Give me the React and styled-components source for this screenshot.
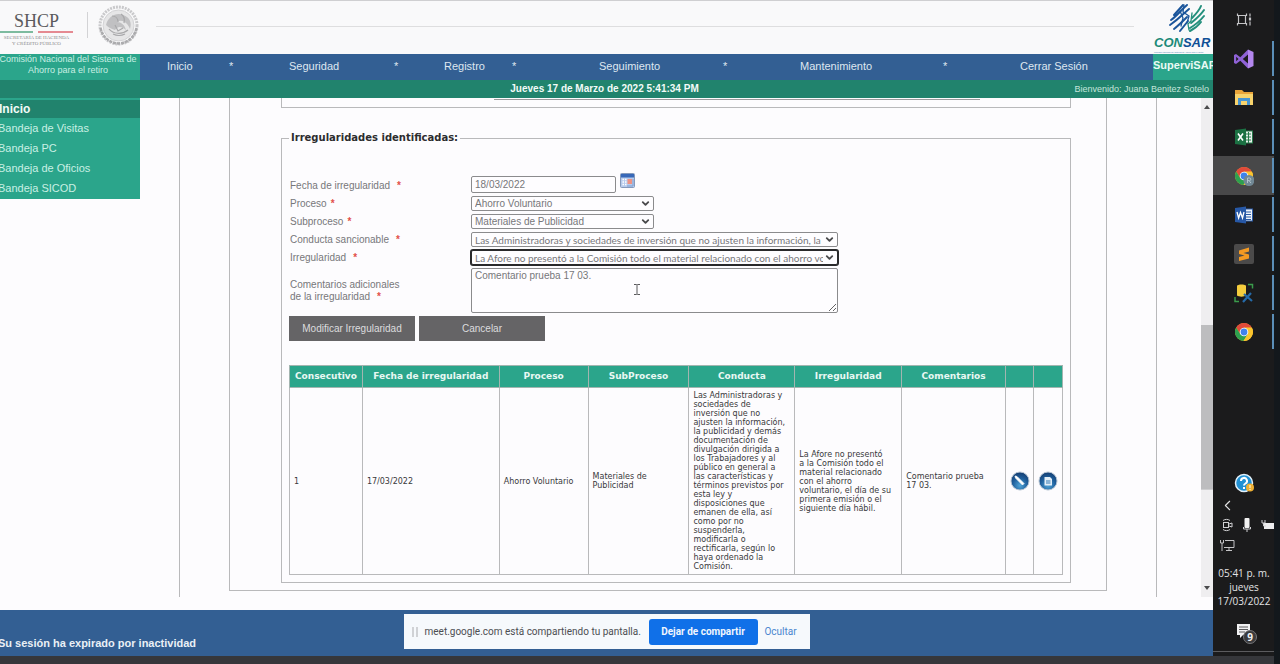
import React from "react";
import styled, { createGlobalStyle, css } from "styled-components";
import { ChevronDown, ChevronLeft } from "lucide-react";

const teal = "#2ba58b";
const darkTeal = "#21836d";
const blue = "#335f93";
const rule = "#b9b9bb";
const sans = `"Liberation Sans", Arial, sans-serif`;
const wide = `"DejaVu Sans", Verdana, sans-serif`;
const ui = `"Open Sans", "Noto Sans", sans-serif`;

const GlobalStyle = createGlobalStyle`
  *, *::before, *::after { box-sizing: border-box; }
  body { margin: 0; background: #fdfcfe; font-family: ${sans}; font-size: 10px; }
  button, input, select, textarea { font: inherit; margin: 0; }
  a { color: inherit; text-decoration: none; }
  ul { list-style: none; margin: 0; padding: 0; }
`;

const Screen = styled.div`
  min-height: 100vh;
  display: grid;
  grid-template-columns: minmax(0, 1fr) 61px 6px;
  grid-template-rows: minmax(0, 1fr) 8px;
`;
const Site = styled.div`
  display: flex;
  flex-direction: column;
  min-width: 0;
  overflow: hidden;
`;
const BottomStrip = styled.div`
  grid-column: 1 / 3;
  grid-row: 2;
  background: #36373b;
`;
const RightEdge = styled.div`
  grid-column: 3;
  grid-row: 1 / 3;
  background: #13181c;
`;

/* Header */
const Header = styled.header`
  height: 54px;
  display: flex;
  background: #f9f9fa;
  border-top: 1px solid #cfcfd1;
`;
const Shcp = styled.div`
  width: 73px;
  padding-top: 12px;
  text-align: center;
  font-family: "Liberation Serif", serif;
  color: #5b5b5d;
`;
const ShcpName = styled.div`
  font-size: 18px;
  line-height: 17px;
`;
const ShcpRule = styled.div`
  display: flex;
  justify-content: space-between;
  margin: 1px 0 2px;
  &::before, &::after {
    content: "";
    width: 33px;
    height: 2px;
    background: #7dbb9f;
  }
  &::after { width: 35px; background: #e58a92; }
`;
const ShcpCaption = styled.div`
  font-size: 5px;
  line-height: 6px;
  white-space: nowrap;
  color: #8a8a8c;
`;
const LogoDivider = styled.div`
  width: 1px;
  height: 26px;
  margin: 11px 9px 0 14px;
  background: #d3d3d5;
`;
const HeaderRule = styled.div`
  flex: 1;
  height: 1px;
  margin: 25px 20px 0 16px;
  background: #dededf;
`;
const Consar = styled.div`
  width: 59px;
  white-space: nowrap;
  svg { display: block; margin: 1px 0 0 13px; }
`;
const ConsarName = styled.div`
  font-size: 13px;
  line-height: 15px;
  font-style: italic;
  font-weight: bold;
  color: #0f4f96;
  span { color: #1c8a78; }
`;
const ConsarCaption = styled.div`
  font-size: 2px;
  line-height: 4px;
  color: #4b7fae;
`;

/* Navigation */
const Nav = styled.nav`
  height: 26px;
  display: flex;
  background: ${blue};
  color: #dfe7f0;
`;
const OrgName = styled.div`
  width: 140px;
  margin-left: -2px;
  margin-right: 2px;
  box-shadow: 2px 0 ${teal};
  background: ${teal};
  color: #c9f0e4;
  font-size: 9px;
  line-height: 11px;
  text-align: center;
  white-space: nowrap;
`;
const Menu = styled.ul`
  flex: 1;
  display: flex;
  padding-left: 27px;
  font-size: 11px;
  line-height: 25px;
`;
const MenuItem = styled.li`
  flex: ${(p) => p.$link + p.$star} 1 0;
  display: grid;
  grid-template-columns: ${(p) => p.$link}fr ${(p) => p.$star}fr;
  white-space: nowrap;
`;
const AppName = styled.div`
  width: 60px;
  overflow: hidden;
  background: ${teal};
  color: #eafaf5;
  font-size: 11px;
  font-weight: bold;
  line-height: 23px;
`;
const StatusBar = styled.div`
  height: 18px;
  display: grid;
  grid-template-columns: 1fr auto 1fr;
  padding-right: 4px;
  background: ${darkTeal};
  line-height: 18px;
  color: #f2fbf8;
`;
const Welcome = styled.span`
  text-align: right;
  font-size: 9px;
  color: #c5e6dc;
`;

/* Body */
const Main = styled.main`
  flex: 1;
  display: flex;
  min-height: 0;
  padding-bottom: 13px;
`;
const Sidebar = styled.nav`
  width: 140px;
  align-self: flex-start;
  overflow: hidden;
  background: ${teal};
  padding-bottom: 1px;
`;
const SideTitle = styled.div`
  background: ${darkTeal};
  border-top: 2px solid ${teal};
  color: #f2fbf8;
  font-size: 12px;
  font-weight: bold;
  line-height: 18px;
  text-indent: -1px;
`;
const SideLink = styled.a`
  display: block;
  color: #c9f0e4;
  font-size: 11px;
  line-height: 20px;
  text-indent: -2px;
`;
const Column = styled.div`
  flex: 1;
  min-width: 0;
  margin: 0 44px 0 39px;
  padding: 0 49px;
  border: solid ${rule};
  border-width: 0 1px;
`;
const Panel = styled.div`
  border: solid ${rule};
  border-width: 0 1px 1px;
  padding: 0 35px 7px 51px;
`;
const PreviousGroup = styled.div`
  height: 10px;
  margin-bottom: 23px;
  border: 1px solid ${rule};
  border-top: 0;
  padding: 0 90px 0 212px;
  &::before {
    content: "";
    display: block;
    height: 2px;
    border-bottom: 1px solid #9a9a9c;
  }
`;
const Group = styled.fieldset`
  min-width: 0;
  margin: 0;
  padding: 28px 7px 7px;
  border: 1px solid ${rule};
`;
const Legend = styled.legend`
  padding: 0 2px;
  font: bold 10px/14px ${wide};
  color: #2c2c2e;
`;
const Form = styled.form`
  color: #77777a;
`;
const Row = styled.div`
  display: grid;
  grid-template-columns: 182px minmax(0, 1fr);
  align-items: ${(p) => p.$align || "center"};
  margin-bottom: 3px;
`;
const Label = styled.label`
  padding-left: 1px;
  line-height: ${(p) => (p.$short ? 12 : 15)}px;
`;
const Required = styled.span`
  margin-left: ${(p) => (p.$near ? 4 : 7)}px;
  color: #e2504a;
  font-weight: bold;
`;
const DateField = styled.div`
  display: flex;
  align-items: flex-end;
  gap: 4px;
`;
const fieldLook = css`
  border: 1px solid #8b8b8d;
  border-radius: 2px;
  background: #fefdff;
  color: #77777a;
  outline: none;
`;
const DateInput = styled.input`
  ${fieldLook}
  width: 145px;
  height: 17px;
  padding: 0 3px;
`;
const IconButton = styled.button`
  display: ${(p) => (p.$center ? "block" : "flex")};
  padding: 0;
  margin: ${(p) => (p.$center ? "0 auto" : "0 0 5px")};
  border: 0;
  background: none;
  svg { display: block; }
`;
const SelectBox = styled.div`
  position: relative;
  width: ${(p) => (p.$wide ? 367 : 183)}px;
  svg { position: absolute; right: 3px; top: 2px; pointer-events: none; color: #4a4a4c; }
`;
const Select = styled.select`
  ${fieldLook}
  appearance: none;
  display: block;
  width: 100%;
  height: 15px;
  padding: 0 14px 0 3px;
  font-family: ${(p) => (p.$long ? `Lato, ${sans}` : sans)};
  ${(p) => p.$active && css`
    border-color: #29292b;
    box-shadow: 0 0 0 1px #29292b;
  `}
`;
const CommentBox = styled.div`
  position: relative;
  width: 367px;
  svg { position: absolute; left: 162px; top: 15px; }
`;
const Comment = styled.textarea`
  ${fieldLook}
  display: block;
  width: 100%;
  height: 45px;
  padding: 1px 3px;
  line-height: 12px;
`;
const Actions = styled.div`
  display: flex;
  gap: 4px;
  margin-bottom: 24px;
`;
const Action = styled.button`
  width: 126px;
  height: 25px;
  border: 0;
  background: #656466;
  color: #dcdcde;
`;
const Table = styled.table`
  width: 100%;
  table-layout: fixed;
  border-collapse: collapse;
  font-family: ${wide};
  font-size: 8px;
  line-height: 9px;
  color: #39393b;
`;
const Th = styled.th`
  height: 22px;
  padding: 0;
  border: 1px solid #a3b5b0;
  background: ${teal};
  color: #e8f8f3;
  font-size: 9px;
`;
const Td = styled.td`
  height: 187px;
  padding: 0 4px;
  border: 1px solid ${rule};
`;
const Line = styled.span`
  display: block;
`;
const ScrollBar = styled.div`
  width: 12px;
  display: flex;
  flex-direction: column;
  align-items: center;
  justify-content: space-between;
  padding: 7px 0;
  background: linear-gradient(#bdbdbf, #bdbdbf) 0 68% / 100% 33% no-repeat #efeef0;
`;

/* Footer */
const Footer = styled.footer`
  position: relative;
  height: 46px;
  padding-top: 26px;
  background: ${blue};
  color: #eaf0f6;
  font-size: 11px;
  font-weight: bold;
  line-height: 14px;
  text-indent: -2px;
`;
const ShareBar = styled.div`
  position: absolute;
  left: 50%;
  top: 4px;
  transform: translateX(-50%);
  width: 406px;
  height: 35px;
  display: flex;
  align-items: center;
  padding: 0 8px;
  background: #f6f9fc;
  font: 10px/14px Roboto, ${sans};
  color: #4c4e52;
  text-indent: 0;
  white-space: nowrap;
`;
const Grip = styled.span`
  width: 6px;
  height: 10px;
  margin-right: 7px;
  border: solid #d0d2d5;
  border-width: 0 2px;
`;
const StopButton = styled.button`
  width: 109px;
  height: 26px;
  margin-left: auto;
  border: 0;
  border-radius: 3px;
  background: #1070e8;
  color: #f1f6fe;
  font-weight: 700;
`;
const HideButton = styled.button`
  width: 38px;
  padding: 0;
  margin: 0 2px 0 4px;
  border: 0;
  background: none;
  color: #4a86cf;
`;

/* Taskbar */
const Taskbar = styled.aside`
  display: flex;
  flex-direction: column;
  background: #1b1b1c;
  color: #e3e3e4;
  border-bottom: 4px solid #1b1b1c;
  box-shadow: inset 0 -1px #5c5c5f;
`;
const Slot = styled.div`
  height: 39px;
  display: flex;
  align-items: center;
  padding-left: 21px;
  background: ${(p) => (p.$active ? "#484849" : "transparent")};
  border-right: 2px solid transparent;
  border-image: ${(p) =>
    p.$running ? "linear-gradient(transparent 3px, #5b8fb8 3px, #5b8fb8 36px, transparent 36px) 1" : "none"};
`;
const Tray = styled.div`
  margin-top: auto;
  display: flex;
  flex-direction: column;
  height: 179px;
`;
const TrayRow = styled.div`
  display: flex;
  align-items: center;
  height: 20px;
  margin-bottom: ${(p) => p.$after || 0}px;
  padding-left: ${(p) => p.$indent || 8}px;
  gap: 8px;
  svg { flex: none; }
`;
const Clock = styled.time`
  margin: 11px 0 15px;
  padding-left: 1px;
  text-align: center;
  font: 10px/14px ${ui};
  white-space: nowrap;
`;

const Emblem = () => (
  <svg width="43" height="43" viewBox="0 0 43 43" style={{ marginTop: 3 }} fill="none" aria-label="Escudo nacional">
    <circle cx="21.500" cy="21.500" r="18.500" stroke="#c9c9cb" strokeWidth="3" strokeDasharray="2 1" />
    <circle cx="21.500" cy="21.500" r="15.500" fill="#e6e6e7" stroke="#d3d3d5" />
    <path d="M9 21c2-9 11-13 17-10 7 2 9 8 7 14-3-7-8-10-13-7 4 0 8 3 9 8-5-4-8-4-11 0-3-1-6-2-9-5z" fill="#c0c0c2" />
    <path d="M15 12c4 0 6 3 6 6M24 10c3 2 4 5 3 9M12 25c4 5 13 6 19 1M16 30c4 2 8 2 12 0M18 21l3 6 5-3" stroke="#a8a8aa" strokeWidth="1.200" />
    <path d="M3.500 24c2 9 9 15 18 15.500 9-.5 16-6 18-15.500" stroke="#ababad" strokeWidth="2.500" strokeDasharray="3 1" />
  </svg>
);

const ConsarMark = () => (
  <svg width="40" height="33" viewBox="0 0 40 33" fill="none" strokeLinecap="round">
    <g stroke="#1b559b" strokeWidth="2">
      <path d="M16 3L7 13M20 3C14 8 10 14 4 18M22 7C16 12 12 17 3 23M20 15C16 19 12 23 7 27M21 19l-8 10" />
      <path d="M17 3l-1 7 6 4-2 7M13 9l3 7-2 8" strokeWidth="1.300" />
    </g>
    <g stroke="#238f7c" strokeWidth="2">
      <path d="M34 4c-2 5-5 8-9 12M37 8c-4 6-8 9-13 13M37 14c-4 5-9 9-14 12M34 20c-3 4-7 7-11 9" />
      <path d="M25 11l-1 8-3 3 1 6" strokeWidth="1.300" />
    </g>
  </svg>
);

const Calendar = () => (
  <svg width="15" height="15" viewBox="0 0 15 15">
    <rect x=".5" y=".5" width="14" height="14" rx="1" fill="#b7cbec" stroke="#8599ba" />
    <rect x="1" y="1" width="13" height="3.500" fill="#3868b8" />
    <path d="M2.500 6.500h5M2.500 9h5M2.500 11.500h4" stroke="#fff" strokeWidth="1.500" strokeDasharray="1.500 1" />
    <rect x="7.500" y="6" width="4.500" height="5" fill="#ee9283" />
    <path d="M13 6v7H7" stroke="#7f9fd3" fill="none" />
  </svg>
);

const Orb = ({ id, children }) => (
  <svg width="20" height="20" viewBox="0 0 20 20">
    <defs>
      <radialGradient id={id} cx=".5" cy=".75" r=".75">
        <stop offset="0" stopColor="#4fa3d6" />
        <stop offset=".55" stopColor="#1f5f9c" />
        <stop offset="1" stopColor="#153c70" />
      </radialGradient>
    </defs>
    <circle cx="10" cy="10" r="9" fill={`url(#${id})`} stroke="#b5c3d2" />
    {children}
  </svg>
);

const Chrome = () => (
  <g>
    <circle cx="10" cy="10" r="9" fill="#fbc42d" />
    <path d="M2.200 5.500A9 9 0 0 1 17.800 5.500L10 5.800 6 12z" fill="#e04a3a" />
    <path d="M2.200 5.500A9 9 0 0 0 9.500 19L13.700 12 6.200 12z" fill="#2da04f" />
    <path d="M10 5.800h7.900A9 9 0 0 1 9.500 19L14 12z" fill="#fbc42d" />
    <circle cx="10" cy="10" r="4.300" fill="#fff" />
    <circle cx="10" cy="10" r="3.400" fill="#3f83ec" />
  </g>
);

const taskIcons = {
  "Vista de tareas": (
    <g stroke="#c4c4c6" strokeWidth="1.200" fill="none">
      <path d="M3.500 3.500v2h9v-2M3.500 15.500v-2h9v2M4.500 5.500v8M11.500 5.500v8M16 3.500v3M16 11.500v4" />
      <path d="M16 7.500v3" strokeWidth="2.200" />
    </g>
  ),
  "Visual Studio": (
    <g>
      <path d="M14 0.500l5.500 2.500v14L14 19.500z" fill="#b487ee" />
      <path d="M14 .5L6.300 8.300 2 5 0 6v8l2 1 4.300-3.300L14 19.500v-5L8.800 10 14 5.500zM2.200 7.700L4.500 10l-2.300 2.300z" fill="#8f62d6" fillRule="evenodd" />
    </g>
  ),
  "Explorador de archivos": (
    <g>
      <path d="M1 2h7l2 2h9v12H1z" fill="#e9a53a" />
      <path d="M1 6h18v11H1z" fill="#f8d36c" />
      <path d="M4 17v-7h12v7h-3v-4H7v4z" fill="#4795d2" />
    </g>
  ),
  Excel: (
    <g>
      <rect x="10" y="4" width="8.500" height="12" fill="#e8f1ec" stroke="#277a4a" />
      <path d="M12 7h5M12 10h5M12 13h5M14.500 5v11" stroke="#277a4a" />
      <path d="M1 3L12 1.500v17L1 17z" fill="#1c7143" />
      <path d="M4 6.500l5 7M9 6.500l-5 7" stroke="#fff" strokeWidth="1.600" />
    </g>
  ),
  "Chrome perfil": (
    <g>
      <Chrome />
      <circle cx="15" cy="14.500" r="5.500" fill="#718895" />
      <path d="M13.500 17v-5h2a1.300 1.300 0 0 1 0 2.600h-2M15 14.600l2 2.400" stroke="#b4c4cc" fill="none" />
    </g>
  ),
  Word: (
    <g>
      <rect x="10" y="4" width="8.500" height="12" fill="#eef3fa" stroke="#2a5aa5" />
      <path d="M12 7h5M12 9.500h5M12 12h5M12 14.500h5" stroke="#2a5aa5" />
      <path d="M1 3L12 1.500v17L1 17z" fill="#2758a6" />
      <path d="M3 7l1.600 6L6.500 7.500l2 5.500L10 7" stroke="#fff" strokeWidth="1.300" fill="none" />
    </g>
  ),
  "Sublime Text": (
    <g>
      <rect width="20" height="20" rx="2" fill="#4b4a4a" />
      <path d="M5 6.500L15 3.500v4L9.500 9l5.500 1.500v4L5 17v-4l5.500-1.500L5 10z" fill="#f59a22" />
    </g>
  ),
  "SQL Server": (
    <g>
      <path d="M3 2.500c2-1.500 7-1.500 9 0v10c-2 1.500-7 1.500-9 0z" fill="#f5cd3d" />
      <path d="M14 1.500h4.500v4M1 14v4.500h4" stroke="#3b9b4b" strokeWidth="1.500" fill="none" />
      <path d="M10 11l8 7M17 10l-8 9" stroke="#256aa8" strokeWidth="2.200" />
    </g>
  ),
  Chrome: <Chrome />,
};

const menu = [
  ["Inicio", 62, 60],
  ["Seguridad", 105, 50],
  ["Registro", 68, 87],
  ["Seguimiento", 124, 77],
  ["Mantenimiento", 143, 77],
  ["Cerrar Sesión", 133, 0],
];

const columns = [
  ["Consecutivo", 73],
  ["Fecha de irregularidad", 137],
  ["Proceso", 89],
  ["SubProceso", 101],
  ["Conducta", 106],
  ["Irregularidad", 107],
  ["Comentarios", 104],
  ["", 28],
  ["", 29],
];

const conducta = [
  "Las Administradoras y",
  "sociedades de",
  "inversión que no",
  "ajusten la información,",
  "la publicidad y demás",
  "documentación de",
  "divulgación dirigida a",
  "los Trabajadores y al",
  "público en general a",
  "las características y",
  "términos previstos por",
  "esta ley y",
  "disposiciones que",
  "emanen de ella, así",
  "como por no",
  "suspenderla,",
  "modificarla o",
  "rectificarla, según lo",
  "haya ordenado la",
  "Comisión.",
];

const irregularidad = [
  "La Afore no presentó",
  "a la Comisión todo el",
  "material relacionado",
  "con el ahorro",
  "voluntario, el día de su",
  "primera emisión o el",
  "siguiente día hábil.",
];

const selects = [
  { id: "proceso", label: "Proceso", near: true, text: "Ahorro Voluntario" },
  { id: "subproceso", label: "Subproceso", near: true, text: "Materiales de Publicidad" },
  { id: "conducta", label: "Conducta sancionable", wide: true, text: "Las Administradoras y sociedades de inversión que no ajusten la información, la" },
  { id: "irregularidad", label: "Irregularidad", wide: true, active: true, text: "La Afore no presentó a la Comisión todo el material relacionado con el ahorro vo" },
];

const Lines = ({ of }) => of.map((text) => <Line key={text}>{text} </Line>);

export default function App() {
  return (
    <Screen>
      <GlobalStyle />
      <Site>
        <Header>
          <Shcp>
            <ShcpName>SHCP</ShcpName>
            <ShcpRule />
            <ShcpCaption>SECRETARÍA DE HACIENDA</ShcpCaption>
            <ShcpCaption>Y CRÉDITO PÚBLICO</ShcpCaption>
          </Shcp>
          <LogoDivider />
          <Emblem />
          <HeaderRule />
          <Consar>
            <ConsarMark />
            <ConsarName><span>CON</span>SAR</ConsarName>
            <ConsarCaption>Comisión Nacional del Sistema de Ahorro para el Retiro</ConsarCaption>
          </Consar>
        </Header>
        <Nav>
          <OrgName>
            Comisión Nacional del Sistema de
            <br />
            Ahorro para el retiro
          </OrgName>
          <Menu>
            {menu.map(([name, link, star]) => (
              <MenuItem key={name} $link={link} $star={star}>
                <a href="#menu">{name}</a>
                {star > 0 && <span>*</span>}
              </MenuItem>
            ))}
          </Menu>
          <AppName>SuperviSAR</AppName>
        </Nav>
        <StatusBar>
          <span />
          <strong>Jueves 17 de Marzo de 2022 5:41:34 PM</strong>
          <Welcome>Bienvenido: Juana Benitez Sotelo</Welcome>
        </StatusBar>
        <Main>
          <Sidebar>
            <SideTitle>Inicio</SideTitle>
            <SideLink href="#visitas">Bandeja de Visitas</SideLink>
            <SideLink href="#pc">Bandeja PC</SideLink>
            <SideLink href="#oficios">Bandeja de Oficios</SideLink>
            <SideLink href="#sicod">Bandeja SICOD</SideLink>
          </Sidebar>
          <Column>
            <Panel>
              <PreviousGroup />
              <Group>
                <Legend>Irregularidades identificadas:</Legend>
                <Form onSubmit={(e) => e.preventDefault()}>
                  <Row $align="end">
                    <Label htmlFor="fecha">
                      Fecha de irregularidad<Required>*</Required>
                    </Label>
                    <DateField>
                      <DateInput id="fecha" defaultValue="18/03/2022" />
                      <IconButton type="button" aria-label="Calendario">
                        <Calendar />
                      </IconButton>
                    </DateField>
                  </Row>
                  {selects.map((s) => (
                    <Row key={s.id}>
                      <Label htmlFor={s.id}>
                        {s.label}
                        <Required $near={s.near}>*</Required>
                      </Label>
                      <SelectBox $wide={s.wide}>
                        <Select id={s.id} $active={s.active} $long={s.wide}>
                          <option>{s.text}</option>
                        </Select>
                        <ChevronDown size={11} strokeWidth={4} />
                      </SelectBox>
                    </Row>
                  ))}
                  <Row>
                    <Label htmlFor="comentarios" $short>
                      Comentarios adicionales
                      <br />
                      de la irregularidad<Required>*</Required>
                    </Label>
                    <CommentBox>
                      <Comment id="comentarios" defaultValue="Comentario prueba 17 03." />
                      <svg width="8" height="13" viewBox="0 0 8 13" fill="none" stroke="#59595b">
                        <path d="M1 1.500h2.500l.5.5.5-.5H7M4 2v9M1 11.500h2.500l.5-.5.5.5H7" />
                      </svg>
                    </CommentBox>
                  </Row>
                  <Actions>
                    <Action type="submit">Modificar Irregularidad</Action>
                    <Action type="button">Cancelar</Action>
                  </Actions>
                </Form>
                <Table>
                  <colgroup>
                    {columns.map(([, width], i) => (
                      <col key={i} style={{ width: `${(width / 774) * 100}%` }} />
                    ))}
                  </colgroup>
                  <thead>
                    <tr>
                      {columns.map(([name], i) => (
                        <Th key={i}>{name}</Th>
                      ))}
                    </tr>
                  </thead>
                  <tbody>
                    <tr>
                      <Td>1</Td>
                      <Td>17/03/2022</Td>
                      <Td>Ahorro Voluntario</Td>
                      <Td>Materiales de Publicidad</Td>
                      <Td><Lines of={conducta} /></Td>
                      <Td><Lines of={irregularidad} /></Td>
                      <Td><Lines of={["Comentario prueba", "17 03."]} /></Td>
                      <Td>
                        <IconButton $center aria-label="Editar">
                          <Orb id="edit">
                            <path d="M5 5l2 .5 7 7-1.500 1.500-7-7z" fill="#fff" stroke="#fff" strokeWidth=".8" />
                          </Orb>
                        </IconButton>
                      </Td>
                      <Td>
                        <IconButton $center aria-label="Eliminar">
                          <Orb id="remove">
                            <path d="M6.500 6h5.500l2 2v6.500h-7.500z" fill="#e3eef7" />
                            <path d="M8 9h4.500v4H8z" fill="#8ab4d6" />
                          </Orb>
                        </IconButton>
                      </Td>
                    </tr>
                  </tbody>
                </Table>
              </Group>
            </Panel>
          </Column>
          <ScrollBar>
            <svg width="6" height="4" viewBox="0 0 6 4"><path d="M0 4l3-4 3 4z" fill="#4b4b4d" /></svg>
            <svg width="6" height="4" viewBox="0 0 6 4"><path d="M0 0l3 4 3-4z" fill="#4b4b4d" /></svg>
          </ScrollBar>
        </Main>
        <Footer>
          Su sesión ha expirado por inactividad
          <ShareBar>
            <Grip />
            meet.google.com está compartiendo tu pantalla.
            <StopButton type="button">Dejar de compartir</StopButton>
            <HideButton type="button">Ocultar</HideButton>
          </ShareBar>
        </Footer>
      </Site>
      <Taskbar>
        {Object.entries(taskIcons).map(([name, icon], i) => (
          <Slot key={name} $active={name === "Chrome perfil"} $running={i > 0}>
            <svg width="20" height="20" viewBox="0 0 20 20" aria-label={name}>{icon}</svg>
          </Slot>
        ))}
        <Tray>
          <TrayRow $indent={21} $after={2}>
            <svg width="20" height="20" viewBox="0 0 20 20" fill="none">
              <circle cx="10" cy="10" r="8.500" fill="#2191d4" stroke="#e4f1fa" strokeWidth="1.500" />
              <path d="M7 8a3 3 0 1 1 4.500 2.500c-1 .6-1.500 1-1.500 2M10 14v2" stroke="#fff" strokeWidth="2" />
              <circle cx="16" cy="14.500" r="4" fill="#eeb033" />
              <path d="M16 12v3M16 16v1" stroke="#fff3d0" strokeWidth="1.200" />
            </svg>
          </TrayRow>
          <TrayRow $indent={6}>
            <ChevronLeft size={17} strokeWidth={1.5} />
          </TrayRow>
          <TrayRow>
            <svg width="12" height="14" viewBox="0 0 12 14" fill="none" stroke="#d0d0d2">
              <rect x="2.500" y="4.500" width="5" height="5" />
              <path d="M8 6l3-1v4l-3-1M2 2.500c2-1.500 5-1.500 7 0M2 11.500c2 1.500 5 1.500 7 0" />
            </svg>
            <svg width="12" height="14" viewBox="0 0 12 14">
              <rect x="3.500" y="0" width="5" height="10" rx="1" fill="#f2f2f2" />
              <path d="M2.500 9v2h7V9M6 11v3" stroke="#cfcfd1" fill="none" />
            </svg>
            <svg width="13" height="12" viewBox="0 0 13 12">
              <path d="M3 4h10v6H3z" fill="#ededee" />
              <path d="M1 1v3h3V1M2.500 4v3H5" stroke="#cfcfd1" fill="none" />
            </svg>
          </TrayRow>
          <TrayRow $indent={7}>
            <svg width="15" height="13" viewBox="0 0 15 13" fill="none" stroke="#c4c4c6">
              <path d="M5 1.500h9v7H4M9 9v3M6 11.500h6M.5 1v3h3V1M2 4v8" />
            </svg>
          </TrayRow>
          <Clock>
            05:41 p. m.
            <br />
            jueves
            <br />
            17/03/2022
          </Clock>
          <TrayRow $indent={23}>
            <svg width="22" height="21" viewBox="0 0 22 21">
              <path d="M1 1h13v11H7l-3 3v-3H1z" fill="#f1f1f2" />
              <path d="M3 4h9M3 6.500h9M3 9h6" stroke="#5a5a5c" />
              <circle cx="14" cy="14" r="6.500" fill="#3b3b3d" stroke="#77777a" />
              <text x="14" y="17.500" textAnchor="middle" fontSize="10" fontWeight="bold" fontFamily="Open Sans, sans-serif" fill="#f1f1f2">9</text>
            </svg>
          </TrayRow>
        </Tray>
      </Taskbar>
      <RightEdge />
      <BottomStrip />
    </Screen>
  );
}
